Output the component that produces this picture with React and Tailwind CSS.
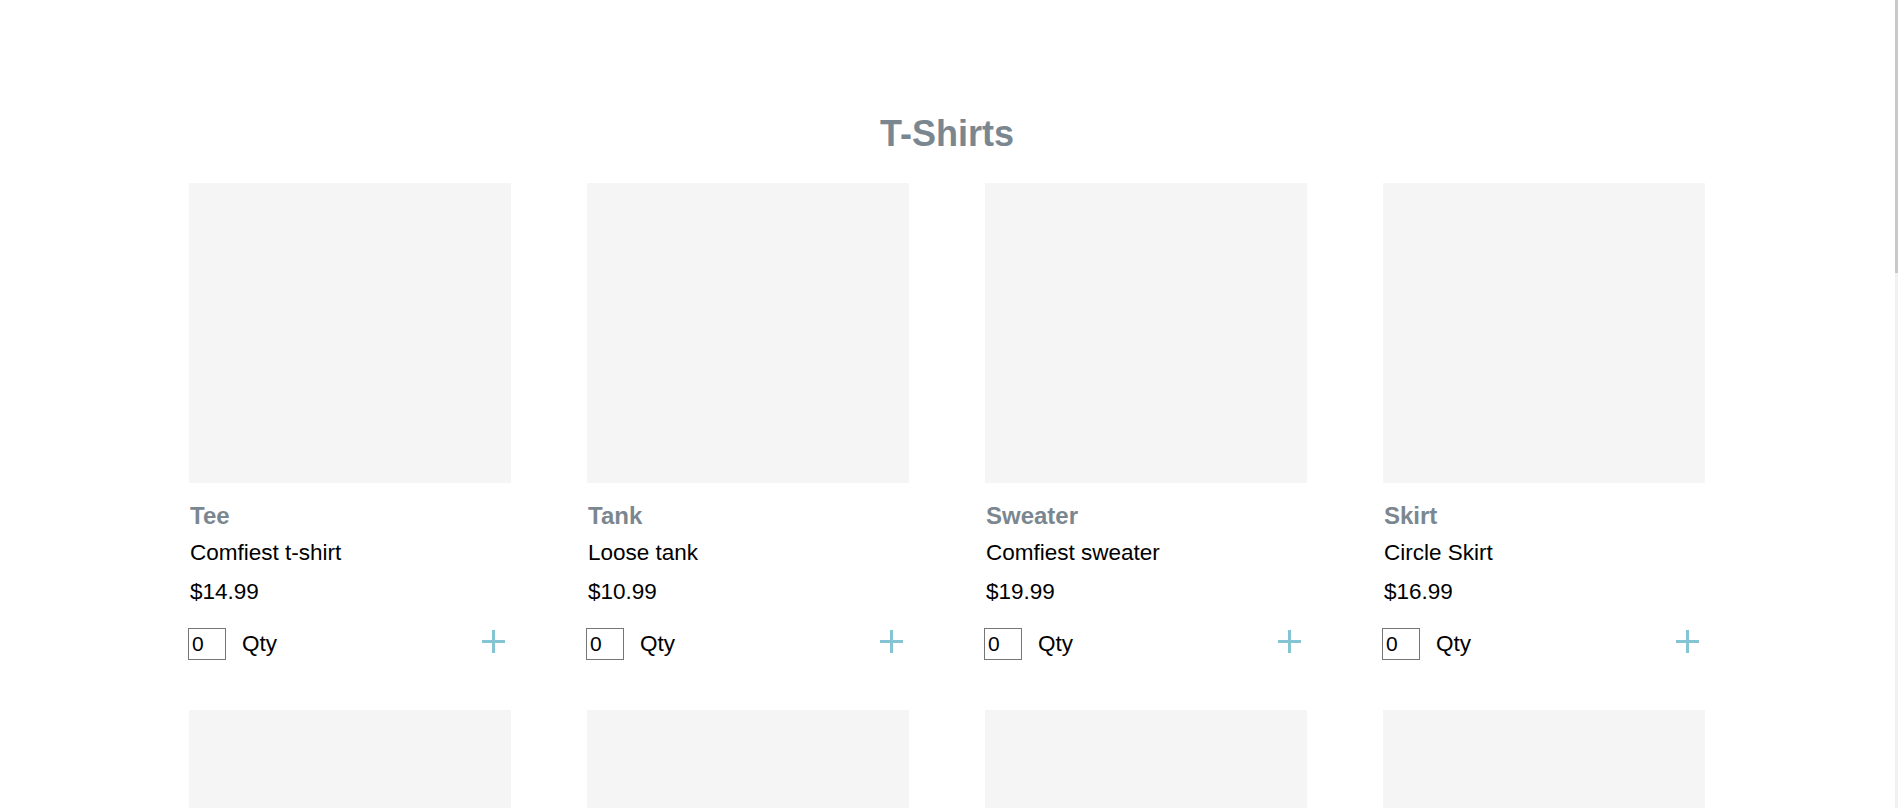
import React from "react";

const products = [
  { name: "Tee", desc: "Comfiest t-shirt", price: "$14.99" },
  { name: "Tank", desc: "Loose tank", price: "$10.99" },
  { name: "Sweater", desc: "Comfiest sweater", price: "$19.99" },
  { name: "Skirt", desc: "Circle Skirt", price: "$16.99" },
  { name: "Tee", desc: "Comfiest t-shirt", price: "$14.99" },
  { name: "Tank", desc: "Loose tank", price: "$10.99" },
  { name: "Sweater", desc: "Comfiest sweater", price: "$19.99" },
  { name: "Skirt", desc: "Circle Skirt", price: "$16.99" },
];

function Plus() {
  return (
    <svg width="23" height="23" viewBox="0 0 23 23" className="block">
      <rect x="10" y="0" width="3" height="23" fill="#85c4d3" />
      <rect x="0" y="10" width="23" height="3" fill="#85c4d3" />
    </svg>
  );
}

function Card({ p }) {
  return (
    <div className="flex flex-col">
      <div className="h-[300px] w-full bg-[#f5f5f5]" />
      <div className="mt-[19px] pl-[1px] text-[24px] leading-[27px] font-bold text-[#7b8790]">
        {p.name}
      </div>
      <div className="mt-[11px] pl-[1px] text-[22.5px] leading-[26px] text-black">{p.desc}</div>
      <div className="mt-[13px] pl-[1px] text-[22.5px] leading-[26px] text-black">{p.price}</div>
      <div className="mt-[23px] flex items-center">
        <input
          type="text"
          defaultValue="0"
          className="ml-[-1px] h-[32px] w-[38px] border border-[#767676] bg-white px-[3px] text-[21px] leading-[26px] text-black outline-none"
          style={{ fontFamily: '"Liberation Sans", Arial, sans-serif' }}
        />
        <span className="ml-[16px] text-[22.5px] leading-[26px] text-black">Qty</span>
        <div className="ml-auto mr-[6px] self-start mt-[2px]">
          <Plus />
        </div>
      </div>
    </div>
  );
}

export default function App() {
  return (
    <div
      className="relative h-screen w-full overflow-hidden bg-white"
      style={{ fontFamily: '"Liberation Sans", Arial, sans-serif' }}
    >
      <div className="pr-[4px]">
        <h1 className="pt-[113px] text-center text-[36px] leading-[41px] font-bold text-[#7b8790]">
          T-Shirts
        </h1>
        <div className="mt-[29px] grid grid-cols-[repeat(4,322px)] justify-center gap-x-[76px] gap-y-[50px]">
          {products.map((p, i) => (
            <Card key={i} p={p} />
          ))}
        </div>
      </div>
      <div className="absolute right-0 top-0 h-full w-[3px] bg-[#f1f1f1]">
        <div className="h-[273px] w-full bg-[#c8c8c8]" />
      </div>
    </div>
  );
}
